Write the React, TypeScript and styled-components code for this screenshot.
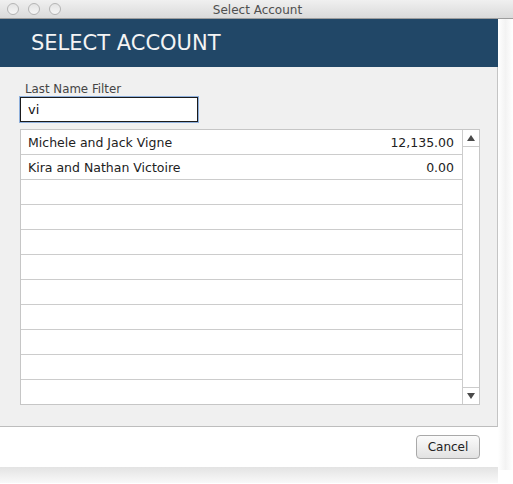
import React from 'react';
import styled, { createGlobalStyle } from 'styled-components';

type Account = {
    name: string
    balance: string
}

const accounts: Account[] = [
    { name: 'Michele and Jack Vigne', balance: '12,135.00' },
    { name: 'Kira and Nathan Victoire', balance: '0.00' },
];

const ROW_COUNT = 11;

export default function App() {
    const rows = Array.from({ length: ROW_COUNT }, (_, i) => accounts[i]);

    return <Window>
        <GlobalStyle />
        <TitleBar>
            <Lights>
                <Light />
                <Light />
                <Light />
            </Lights>
            <WindowTitle>Select Account</WindowTitle>
        </TitleBar>

        <Body>
            <Main>
                <Header>SELECT ACCOUNT</Header>

                <Panel>
                    <Label>Last Name Filter</Label>
                    <FilterInput defaultValue="vi" />

                    <Table>
                        <Rows>
                            { rows.map((row, i) => <Row key={i}>
                                <Name>{ row?.name }</Name>
                                <Amount>{ row?.balance }</Amount>
                            </Row>) }
                        </Rows>
                        <ScrollBar>
                            <ScrollButton>
                                <svg width="8" height="6" viewBox="0 0 8 6"><path d="M4 0 L8 6 L0 6 Z" fill="#4a4a4a" /></svg>
                            </ScrollButton>
                            <Track />
                            <ScrollButton $bottom>
                                <svg width="8" height="6" viewBox="0 0 8 6"><path d="M0 0 L8 0 L4 6 Z" fill="#4a4a4a" /></svg>
                            </ScrollButton>
                        </ScrollBar>
                    </Table>
                </Panel>

                <Footer>
                    <CancelButton>Cancel</CancelButton>
                </Footer>

                <BottomStrip />
            </Main>
            <Gutter />
        </Body>
    </Window>;
}

const GlobalStyle = createGlobalStyle`
    html, body {
        margin: 0;
        padding: 0;
        background: #ffffff;
    }
`

const Window = styled.div`
    width: 513px;
    height: 484px;
    overflow: hidden;
    font-family: "DejaVu Sans", Verdana, sans-serif;
    background: #ffffff;
`

const TitleBar = styled.div`
    position: relative;
    height: 18px;
    border-bottom: 1px solid #9d9d9d;
    background: linear-gradient(#f0f0f0, #dadada);
    display: flex;
    align-items: center;
    justify-content: center;
`

const Lights = styled.div`
    position: absolute;
    left: 7px;
    top: 3px;
    display: flex;
    gap: 9px;
`

const Light = styled.span`
    width: 10px;
    height: 10px;
    border-radius: 50%;
    border: 1px solid #b4b4b4;
    background: linear-gradient(#e4e4e4, #f6f6f6);
    box-sizing: content-box;
`

const WindowTitle = styled.div`
    font-size: 12px;
    color: #4f4f4f;
    margin-left: 2px;
    padding-top: 1px;
`

const Body = styled.div`
    display: flex;
`

const Main = styled.div`
    width: 498px;
    display: flex;
    flex-direction: column;
`

const Gutter = styled.div`
    width: 15px;
    height: 451px;
    background: linear-gradient(90deg, #ffffff 0%, #f3f3f3 50%, #ffffff 100%);
`

const Header = styled.div`
    height: 48px;
    background: #214767;
    color: #f4f4f4;
    font-size: 21px;
    display: flex;
    align-items: center;
    padding-left: 31px;
`

const Panel = styled.div`
    height: 344px;
    background: #f0f0f0;
    border-right: 1px solid #c4c4c4;
    border-bottom: 1px solid #bdbdbd;
    padding: 15px 0 0 20px;
    box-sizing: content-box;
    width: 477px;
`

const Label = styled.div`
    font-size: 11.8px;
    color: #444444;
    line-height: 14px;
    padding-left: 5px;
`

const FilterInput = styled.input`
    display: block;
    margin-top: 1px;
    width: 178px;
    height: 25px;
    box-sizing: border-box;
    border: 1px solid #1b1b1b;
    outline: none;
    box-shadow: 0 0 0 1px #8fb0dc;
    padding: 0 0 0 7px;
    font-family: "DejaVu Sans", Verdana, sans-serif;
    font-size: 13px;
    color: #111111;
    background: #ffffff;
`

const Table = styled.div`
    margin-top: 7px;
    width: 460px;
    height: 276px;
    box-sizing: border-box;
    border: 1px solid #c6c6c6;
    background: #ffffff;
    display: flex;
`

const Rows = styled.div`
    flex: 1;
    display: flex;
    flex-direction: column;
`

const Row = styled.div`
    height: 25px;
    box-sizing: border-box;
    border-bottom: 1px solid #cccccc;
    display: flex;
    align-items: center;
    justify-content: space-between;
    padding: 0 8px 0 7px;
    font-size: 12.5px;
    color: #222222;

    &:last-child {
        border-bottom: none;
        height: 24px;
    }
`

const Name = styled.span``

const Amount = styled.span``

const ScrollBar = styled.div`
    width: 16px;
    border-left: 1px solid #cccccc;
    display: flex;
    flex-direction: column;
`

const ScrollButton = styled.div<{ $bottom?: boolean }>`
    height: 16px;
    display: flex;
    align-items: center;
    justify-content: center;
    ${p => p.$bottom ? 'border-top: 1px solid #cccccc;' : 'border-bottom: 1px solid #cccccc;'}
`

const Track = styled.div`
    flex: 1;
`

const Footer = styled.div`
    height: 40px;
    display: flex;
    justify-content: flex-end;
    align-items: flex-start;
    padding: 8px 18px 0 0;
    box-sizing: border-box;
`

const CancelButton = styled.button`
    width: 64px;
    height: 24px;
    border: 1px solid #a9a9a9;
    border-radius: 4px;
    background: linear-gradient(#fbfbfb, #e2e2e2);
    font-family: "DejaVu Sans", Verdana, sans-serif;
    font-size: 12px;
    color: #222222;
    padding: 0;
`

const BottomStrip = styled.div`
    height: 16px;
    background: linear-gradient(#e3e3e3, #f9f9f9);
`
